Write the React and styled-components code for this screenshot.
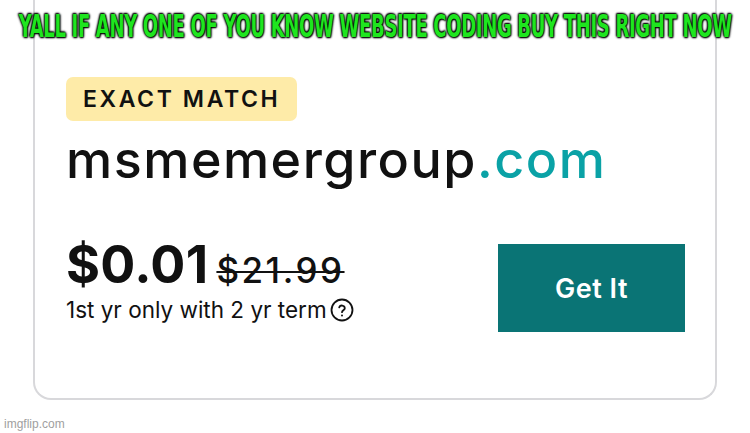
import React from "react";
import styled, { createGlobalStyle } from "styled-components";

const GlobalStyle = createGlobalStyle`
  html, body {
    margin: 0;
    padding: 0;
    background: #ffffff;
  }
  body {
    font-family: Inter, "Liberation Sans", sans-serif;
  }
`;

const Page = styled.div`
  position: relative;
  width: 750px;
  height: 433px;
  overflow: hidden;
  background: #ffffff;
`;

// meme caption over the screenshot
const Caption = styled.div`
  position: absolute;
  top: 8px;
  left: 0;
  right: 0;
  display: flex;
  justify-content: center;
  white-space: nowrap;
`;

const CaptionText = styled.span`
  display: inline-block;
  transform: scaleX(0.625);
  transform-origin: center;
  font-family: Impact, "DejaVu Sans Condensed", "Liberation Sans Narrow", sans-serif;
  font-weight: 700;
  font-size: 32px;
  line-height: 36px;
  letter-spacing: -0.5px;
  color: #1fe51f;
  text-shadow: 0 0 3px #000, 0 0 3px #000, 1px 1px 2px #000, -1px -1px 2px #000;
`;

const Card = styled.section`
  margin: 0 33px 0 33px;
  width: 684px;
  height: 400px;
  box-sizing: border-box;
  border: 2px solid #d8d8db;
  border-top: none;
  border-radius: 0 0 18px 18px;
  padding: 77px 30px 0 31px;
`;

const Badge = styled.div`
  display: inline-flex;
  align-items: center;
  height: 44px;
  padding: 0 17px;
  box-sizing: border-box;
  background: #feeba8;
  border-radius: 7px;
  font-size: 23px;
  font-weight: 600;
  letter-spacing: 2.6px;
  color: #111111;
`;

const Domain = styled.div`
  margin-top: 9px;
  font-size: 52px;
  line-height: 60px;
  font-weight: 500;
  color: #111111;
  letter-spacing: 1.5px;
`;

const Tld = styled.span`
  color: #0aa2a6;
`;

const BottomRow = styled.div`
  margin-top: 48px;
  display: flex;
  align-items: flex-start;
  justify-content: space-between;
`;

const PriceBlock = styled.div`
  display: flex;
  flex-direction: column;
`;

const PriceLine = styled.div`
  display: flex;
  align-items: baseline;
  gap: 8px;
`;

const Price = styled.span`
  font-size: 52px;
  line-height: 54px;
  font-weight: 700;
  color: #111111;
  letter-spacing: 0.3px;
`;

const OldPrice = styled.span`
  font-size: 35px;
  font-weight: 500;
  color: #111111;
  letter-spacing: 2.5px;
  text-decoration: line-through;
  text-decoration-thickness: 2px;
`;

const Term = styled.div`
  display: flex;
  align-items: center;
  gap: 3px;
  margin-top: 4px;
  font-size: 22.5px;
  line-height: 28px;
  font-weight: 400;
  color: #111111;
`;

const Button = styled.button`
  margin-top: 6px;
  width: 187px;
  height: 88px;
  border: none;
  background: #0a7475;
  color: #ffffff;
  font-family: Inter, "Liberation Sans", sans-serif;
  font-size: 27px;
  font-weight: 600;
  letter-spacing: 0.5px;
  cursor: pointer;
`;

const Watermark = styled.div`
  padding: 17px 0 0 4px;
  font-family: "Liberation Sans Narrow", "Liberation Sans", sans-serif;
  font-size: 12px;
  color: #a0a0a0;
`;

const HelpIcon = () => (
  <svg width="24" height="24" viewBox="0 0 24 24" fill="none" stroke="#111" strokeWidth="1.8">
    <circle cx="12" cy="12" r="10.5" />
    <path d="M9.2 9.4a2.9 2.9 0 0 1 5.6 0.8c0 1.9-2.8 2.3-2.8 4" strokeLinecap="round" />
    <circle cx="12" cy="17.4" r="1" fill="#111" stroke="none" />
  </svg>
);

const App = () => {
  return (
    <Page>
      <GlobalStyle />
      <Card>
        <Badge>EXACT MATCH</Badge>
        <Domain>
          msmemergroup<Tld>.com</Tld>
        </Domain>
        <BottomRow>
          <PriceBlock>
            <PriceLine>
              <Price>$0.01</Price>
              <OldPrice>$21.99</OldPrice>
            </PriceLine>
            <Term>
              1st yr only with 2 yr term
              <HelpIcon />
            </Term>
          </PriceBlock>
          <Button>Get It</Button>
        </BottomRow>
      </Card>
      <Watermark>imgflip.com</Watermark>
      <Caption>
        <CaptionText>YALL IF ANY ONE OF YOU KNOW WEBSITE CODING BUY THIS RIGHT NOW</CaptionText>
      </Caption>
    </Page>
  );
};

export default App;
